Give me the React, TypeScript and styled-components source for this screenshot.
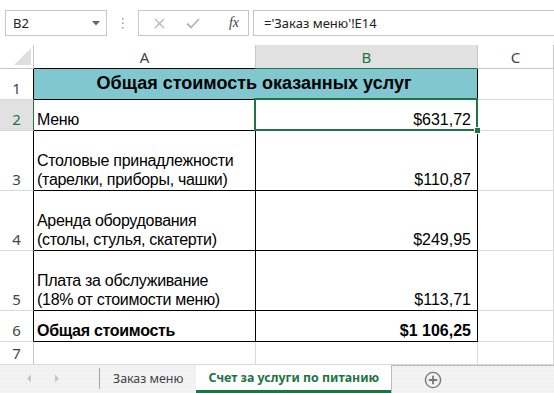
import React from "react";
import styled, { createGlobalStyle, css } from "styled-components";

const GREEN = "#217346";
const GRID = "#d9d9d9";
const UI_FONT = `"Noto Sans", "Open Sans", sans-serif`;
const CELL_FONT = `"Liberation Sans", Arial, sans-serif`;

const GlobalStyle = createGlobalStyle`
  html, body {
    margin: 0;
    padding: 0;
    background: #ffffff;
    overflow: hidden;
  }
`;

const Window = styled.div`
  width: 554px;
  height: 393px;
  display: flex;
  flex-direction: column;
  overflow: hidden;
  background: #ffffff;
`;

/* ---------- formula bar ---------- */

const FormulaBar = styled.div`
  height: 46px;
  box-sizing: border-box;
  padding: 10px 0 0 5px;
  display: flex;
  align-items: flex-start;
  font-family: ${UI_FONT};
  font-size: 13px;
  color: #222;
`;

const NameBox = styled.div`
  width: 102px;
  height: 26px;
  box-sizing: border-box;
  border: 1px solid #c6c6c6;
  display: flex;
  align-items: center;
  justify-content: space-between;
  padding: 0 6px 0 7px;
`;

const Dots = styled.div`
  width: 31px;
  height: 26px;
  display: flex;
  align-items: center;
  justify-content: center;
`;

const FxBox = styled.div`
  width: 111px;
  height: 26px;
  box-sizing: border-box;
  border: 1px solid #c6c6c6;
  display: flex;
  align-items: center;
  padding: 0 9px 0 15px;
  gap: 21px;
`;

const FxLabel = styled.span`
  margin-left: auto;
  font-family: "Liberation Serif", serif;
  font-style: italic;
  font-size: 14px;
  color: #444;
`;

const FormulaInput = styled.div`
  flex: 1;
  margin-left: 4px;
  height: 26px;
  box-sizing: border-box;
  border-top: 1px solid #c6c6c6;
  border-bottom: 1px solid #c6c6c6;
  border-left: 1px solid #c6c6c6;
  display: flex;
  align-items: center;
  padding-left: 10px;
`;

/* ---------- sheet ---------- */

const Sheet = styled.div`
  display: grid;
  grid-template-columns: 34px 222px 222px 76px;
  grid-template-rows: 24px 31px 31px 60px 60px 60px 31px 23px;
`;

const Corner = styled.div`
  border-right: 1px solid #c6c6c6;
  border-bottom: 1px solid #c6c6c6;
  display: flex;
  align-items: flex-end;
  justify-content: flex-end;
  padding: 0 2px 3px 0;
`;

const ColHeader = styled.div<{ $active?: boolean; $edge?: string }>`
  border-right: 1px solid #c6c6c6;
  border-bottom: 1px solid ${(p) => p.$edge || "#c6c6c6"};
  background: ${(p) => (p.$active ? "#e1e1e1" : "#ffffff")};
  color: ${(p) => (p.$active ? GREEN : "#444")};
  font-family: ${UI_FONT};
  font-size: 15px;
  display: flex;
  align-items: center;
  justify-content: center;
  ${(p) =>
    p.$active &&
    css`
      border-bottom-width: 2px;
      margin-bottom: -1px;
    `}
`;

const RowHeader = styled.div<{ $active?: boolean; $edge?: string }>`
  border-right: 1px solid ${(p) => p.$edge || "#c6c6c6"};
  border-bottom: 1px solid ${GRID};
  background: ${(p) => (p.$active ? "#e1e1e1" : "#ffffff")};
  color: ${(p) => (p.$active ? GREEN : "#444")};
  font-family: ${UI_FONT};
  font-size: 15px;
  line-height: 19px;
  display: flex;
  align-items: flex-end;
  justify-content: center;
  padding-bottom: 1px;
  box-sizing: border-box;
`;

const Cell = styled.div<{
  $boxed?: boolean;
  $align?: "left" | "right" | "center";
  $bold?: boolean;
  $fill?: string;
  $span?: number;
  $title?: boolean;
}>`
  position: relative;
  box-sizing: border-box;
  border-right: 1px solid ${(p) => (p.$boxed ? "#000" : GRID)};
  border-bottom: 1px solid ${(p) => (p.$boxed ? "#000" : GRID)};
  background: ${(p) => p.$fill || "#ffffff"};
  grid-column: span ${(p) => p.$span || 1};
  font-family: ${CELL_FONT};
  font-size: ${(p) => (p.$title ? "18px" : "16px")};
  letter-spacing: ${(p) => (p.$align ? "0" : "-0.3px")};
  line-height: 19px;
  font-weight: ${(p) => (p.$bold ? 700 : 400)};
  color: #000;
  display: flex;
  flex-direction: column;
  justify-content: ${(p) => (p.$title ? "center" : "flex-end")};
  text-align: ${(p) => p.$align || "left"};
  padding: 0 6px 1px 3px;
  white-space: nowrap;
`;

const Selected = styled(Cell)`
  &::after {
    content: "";
    position: absolute;
    top: -2px;
    left: -2px;
    right: -1px;
    bottom: -1px;
    border: 2px solid ${GREEN};
    pointer-events: none;
  }
  &::before {
    content: "";
    position: absolute;
    right: -4px;
    bottom: -4px;
    width: 5px;
    height: 5px;
    background: ${GREEN};
    border: 1px solid #ffffff;
    z-index: 2;
  }
`;

/* ---------- sheet tabs ---------- */

const TabBar = styled.div`
  height: 28px;
  display: flex;
  background-color: #f3f3f3;
  background-image: radial-gradient(#e6e6e6 0.6px, transparent 0.8px);
  background-size: 4px 4px;
  font-family: ${UI_FONT};
  font-size: 12.4px;
`;

const NavArea = styled.div`
  width: 100px;
  display: flex;
  align-items: center;
  padding-left: 26px;
  gap: 22px;
  box-sizing: border-box;
  border-right: 1px solid #a6a6a6;
  margin: 3px 0 4px;
`;

const Tab = styled.div<{ $active?: boolean }>`
  display: flex;
  align-items: center;
  padding: 0 ${(p) => (p.$active ? "12px" : "13px")} 2px;
  color: ${(p) => (p.$active ? GREEN : "#444")};
  font-weight: ${(p) => (p.$active ? 700 : 400)};
  ${(p) =>
    p.$active &&
    css`
      background: #ffffff;
      border-bottom: 3px solid ${GREEN};
      padding-bottom: 0;
    `}
`;

const PlusArea = styled.div`
  flex: 1;
  border-left: 1px solid #bcbcbc;
  border-top: 1px solid #bcbcbc;
  display: flex;
  align-items: center;
  padding-left: 32px;
`;

const Arrow = ({ left }: { left?: boolean }) => (
  <svg width="6" height="9" viewBox="0 0 6 9">
    <path d={left ? "M5 0.5 L1 4.5 L5 8.5 Z" : "M1 0.5 L5 4.5 L1 8.5 Z"} fill="#c6c6c6" />
  </svg>
);

export default function App() {
  return (
    <Window>
      <GlobalStyle />
      <FormulaBar>
        <NameBox>
          <span>B2</span>
          <svg width="8" height="5" viewBox="0 0 8 5">
            <path d="M0 0 H8 L4 4.5 Z" fill="#666" />
          </svg>
        </NameBox>
        <Dots>
          <svg width="3" height="13" viewBox="0 0 3 13">
            <rect x="1" y="1" width="1.5" height="1.5" fill="#999" />
            <rect x="1" y="5.5" width="1.5" height="1.5" fill="#999" />
            <rect x="1" y="10" width="1.5" height="1.5" fill="#999" />
          </svg>
        </Dots>
        <FxBox>
          <svg width="11" height="11" viewBox="0 0 11 11">
            <path d="M1 1 L10 10 M10 1 L1 10" stroke="#b5b5b5" strokeWidth="1.3" />
          </svg>
          <svg width="14" height="11" viewBox="0 0 14 11">
            <path d="M1 5.5 L5 9.5 L13 1" stroke="#b5b5b5" strokeWidth="1.8" fill="none" />
          </svg>
          <FxLabel>fx</FxLabel>
        </FxBox>
        <FormulaInput>='Заказ меню'!E14</FormulaInput>
      </FormulaBar>

      <Sheet>
        <Corner>
          <svg width="17" height="17" viewBox="0 0 17 17">
            <path d="M17 0 V17 H0 Z" fill="#dfdfdf" />
          </svg>
        </Corner>
        <ColHeader $edge="#000">A</ColHeader>
        <ColHeader $active $edge={GREEN}>B</ColHeader>
        <ColHeader>C</ColHeader>

        <RowHeader $edge="#000">1</RowHeader>
        <Cell $boxed $span={2} $bold $title $fill="#80c7d0" $align="center">
          Общая стоимость оказанных услуг
        </Cell>
        <Cell />

        <RowHeader $active $edge={GREEN}>2</RowHeader>
        <Cell $boxed>Меню</Cell>
        <Selected $boxed $align="right">$631,72</Selected>
        <Cell />

        <RowHeader $edge="#000">3</RowHeader>
        <Cell $boxed>
          <span>Столовые принадлежности</span>
          <span>(тарелки, приборы, чашки)</span>
        </Cell>
        <Cell $boxed $align="right">$110,87</Cell>
        <Cell />

        <RowHeader $edge="#000">4</RowHeader>
        <Cell $boxed>
          <span>Аренда оборудования</span>
          <span>(столы, стулья, скатерти)</span>
        </Cell>
        <Cell $boxed $align="right">$249,95</Cell>
        <Cell />

        <RowHeader $edge="#000">5</RowHeader>
        <Cell $boxed>
          <span>Плата за обслуживание</span>
          <span>(18% от стоимости меню)</span>
        </Cell>
        <Cell $boxed $align="right">$113,71</Cell>
        <Cell />

        <RowHeader $edge="#000">6</RowHeader>
        <Cell $boxed $bold>Общая стоимость</Cell>
        <Cell $boxed $bold $align="right">$1 106,25</Cell>
        <Cell />

        <RowHeader>7</RowHeader>
        <Cell />
        <Cell />
        <Cell />
      </Sheet>

      <TabBar>
        <NavArea>
          <Arrow left />
          <Arrow />
        </NavArea>
        <Tab>Заказ меню</Tab>
        <Tab $active>Счет за услуги по питанию</Tab>
        <PlusArea>
          <svg width="18" height="18" viewBox="0 0 18 18">
            <circle cx="9" cy="9" r="7.6" stroke="#777" strokeWidth="1.4" fill="none" />
            <path d="M9 4.8 V13.2 M4.8 9 H13.2" stroke="#777" strokeWidth="1.8" />
          </svg>
        </PlusArea>
      </TabBar>
    </Window>
  );
}
